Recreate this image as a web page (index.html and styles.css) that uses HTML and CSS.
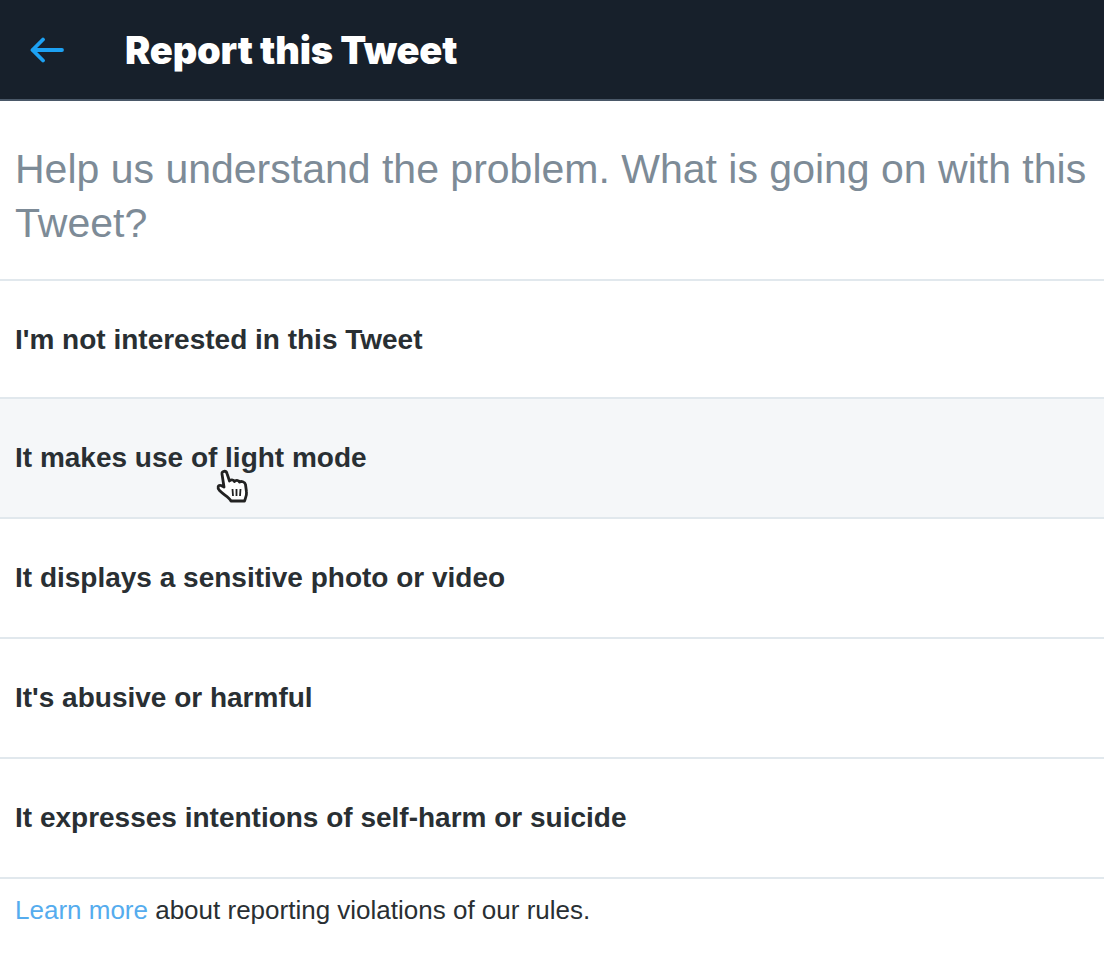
FILE: index.html
```html
<!DOCTYPE html>
<html lang="en">
<head>
    <meta charset="UTF-8">
    <meta name="viewport" content="width=device-width, initial-scale=1.0">
    <title>Report this Tweet</title>
    <link rel="stylesheet" href="styles.css">
</head>
<body>
    <header class="top-bar">
        <svg class="back-icon" width="34" height="26" viewBox="0 0 34 26" aria-hidden="true">
            <path d="M32 13H2.500M13 2.500L2.500 13L13 23.500" fill="none" stroke="#1da1f2" stroke-width="3.800" stroke-linecap="round" stroke-linejoin="round"/>
        </svg>
        <h1>Report this Tweet</h1>
    </header>

    <main>
        <h2 class="question">Help us understand the problem. What is going on with this Tweet?</h2>
        <ul class="options">
            <li class="option">I'm not interested in this Tweet</li>
            <li class="option is-hover">
                It makes use of light mode
                <svg class="hand-cursor" width="36" height="36" viewBox="0 0 36 36" aria-hidden="true">
                    <path d="M10 18L8 5C7.500 2 12 1 13 4.500L15.500 12C16.500 10.500 19.500 10.500 20.500 12.500C21.500 11 24.500 11 25.500 13C27 12 31 12.500 31.500 15.500L32.500 23C33 26 31.500 29 30.500 32H17C15 28 10 26 5.500 21.500C3 19 4 15.500 7 16.500Z" fill="#fff" stroke="#222" stroke-width="2.800" stroke-linejoin="round"/>
                    <path d="M18.500 20L19 27M22.500 20V27M26.500 20L26 27" stroke="#222" stroke-width="1.800" fill="none"/>
                </svg>
            </li>
            <li class="option">It displays a sensitive photo or video</li>
            <li class="option">It's abusive or harmful</li>
            <li class="option">It expresses intentions of self-harm or suicide</li>
        </ul>
        <p class="learn-more"><a href="#">Learn more</a> about reporting violations of our rules.</p>
    </main>
</body>
</html>
```

FILE: styles.css
```css
body {
    margin: 0;
    background: #fff;
    font-family: "Liberation Sans", Arial, sans-serif;
}

.top-bar {
    display: flex;
    align-items: center;
    height: 99px;
    padding-left: 30px;
    background: #17202b;
    border-bottom: 2px solid #4a5868;
}

.back-icon {
    margin-right: 61px;
}

.top-bar h1 {
    margin: 0;
    color: #fff;
    font-family: Inter, "Liberation Sans", sans-serif;
    font-size: 38px;
    font-weight: 900;
    letter-spacing: -0.2px;
}

.question {
    margin: 0;
    padding: 41px 15px 29px;
    color: #7d8b97;
    font-size: 41px;
    font-weight: 400;
    line-height: 54px;
}

.options {
    margin: 0;
    padding: 0;
    list-style: none;
}

.option {
    position: relative;
    height: 118px;
    padding-left: 15px;
    border-top: 2px solid #e1e8ed;
    color: #292f33;
    font-size: 28px;
    font-weight: 700;
    line-height: 118px;
}

.option:first-child {
    height: 116px;
}

.option.is-hover {
    background: #f5f7f9;
}

.hand-cursor {
    position: absolute;
    left: 214px;
    top: 70px;
}

.learn-more {
    margin: 0;
    padding: 16px 15px;
    border-top: 2px solid #e1e8ed;
    color: #292f33;
    font-size: 26px;
    line-height: 30px;
}

.learn-more a {
    color: #55acee;
    text-decoration: none;
}
```
